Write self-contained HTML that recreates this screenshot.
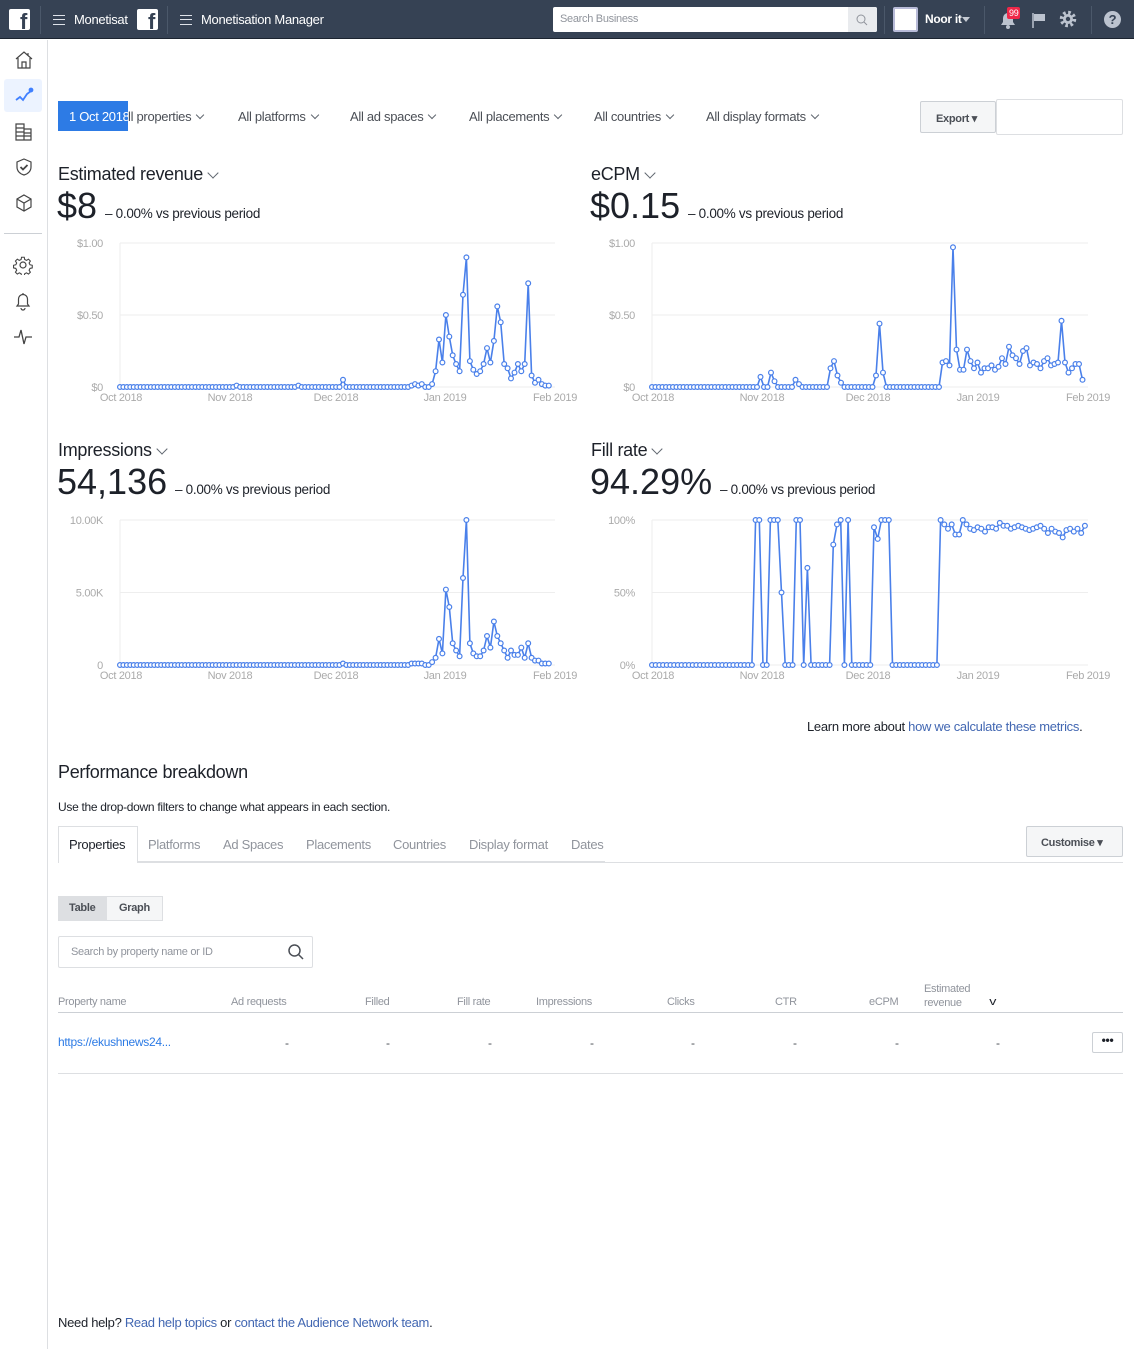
<!DOCTYPE html>
<html><head><meta charset="utf-8">
<style>
*{box-sizing:border-box;margin:0;padding:0}
body{width:1134px;height:1349px;background:#fff;font-family:"Liberation Sans",Arial,sans-serif;color:#1d2129;position:relative;overflow:hidden;letter-spacing:-0.3px}
.abs{position:absolute}
#top{left:0;top:0;width:1134px;height:39px;background:#364254;border-bottom:1px solid #1c2430}
.fb{width:21px;height:21px;background:#fff;border-radius:2px;color:#364254;font-weight:bold;font-size:22px;text-align:right;padding-right:3px;line-height:26px;overflow:hidden}
.ham{width:12px;height:10px;border-top:1.5px solid #dfe3ea;border-bottom:1.5px solid #dfe3ea}
.ham:after{content:"";position:absolute;left:0;top:3px;width:12px;border-top:1.5px solid #dfe3ea}
.wt{color:#fff;font-size:13px}
.sep{width:1px;height:28px;background:#4b586a;top:6px}
#side{left:0;top:40px;width:48px;height:1309px;border-right:1px solid #dddfe2}
.filt{font-size:13px;color:#4b4f56;top:109px}
.chev{display:inline-block;width:6px;height:6px;border-right:1.3px solid #606770;border-bottom:1.3px solid #606770;transform:rotate(45deg);margin-left:6px;position:relative;top:-3px}
.ttl{font-size:18px;color:#1d2129}
.big{font-size:36px;color:#1d2129;letter-spacing:0}
.cmp{font-size:13.5px;color:#1d2129}
.tab{font-size:13px;color:#90949c;top:837px}
.th{font-size:11px;color:#90949c;top:996px}
.dash{font-size:12px;color:#4b4f56;top:1036px}
a{color:#4267b2;text-decoration:none}
svg text{font-family:"Liberation Sans",Arial,sans-serif;font-size:11px;fill:#aaa}
</style></head><body>
<div id="top" class="abs">
 <div class="abs fb" style="left:9px;top:9px">f</div>
 <div class="abs sep" style="left:40px"></div>
 <div class="abs ham" style="left:53px;top:15px"></div>
 <div class="abs wt" style="left:74px;top:12px;width:54px;overflow:hidden;white-space:nowrap">Monetisation</div>
 <div class="abs fb" style="left:137px;top:9px">f</div>
 <div class="abs sep" style="left:167px"></div>
 <div class="abs ham" style="left:180px;top:15px"></div>
 <div class="abs wt" style="left:201px;top:12px">Monetisation Manager</div>
 <div class="abs" style="left:553px;top:7px;width:324px;height:25px;background:#fff;border-radius:2px"></div>
 <div class="abs" style="left:560px;top:13px;font-size:11px;color:#90949c">Search Business</div>
 <div class="abs" style="left:848px;top:7px;width:29px;height:25px;background:#e9ebee;border-radius:0 2px 2px 0"></div>
 <svg class="abs" style="left:855px;top:13px" width="14" height="14"><circle cx="6" cy="6" r="4" stroke="#90949c" fill="none"/><path d="M9 9l3 3" stroke="#90949c"/></svg>
 <div class="abs sep" style="left:884px"></div>
 <div class="abs" style="left:893px;top:7px;width:25px;height:25px;background:#fff;border:2px solid #b8bbd8;border-radius:2px"></div>
 <div class="abs wt" style="left:925px;top:12px;font-size:12px;font-weight:bold">Noor it</div>
 <div class="abs" style="left:962px;top:17px;border:4px solid transparent;border-top:5px solid #c5cad3"></div>
 <div class="abs sep" style="left:984px"></div>
 <svg class="abs" style="left:998px;top:10px" width="20" height="20"><path d="M3 15h14l-2-3V8a5 5 0 0 0-10 0v4z" fill="#bcc3cf"/><circle cx="10" cy="17" r="2" fill="#bcc3cf"/></svg>
 <div class="abs" style="left:1007px;top:7px;background:#f02849;color:#fff;font-size:9px;padding:1px 2px;border-radius:2px">99</div>
 <svg class="abs" style="left:1031px;top:11px" width="16" height="18"><path d="M2 2v15" stroke="#bcc3cf" stroke-width="1.5"/><path d="M3 3h11v7H3z" fill="#bcc3cf"/></svg>
 <svg class="abs" style="left:1058px;top:9px" width="20" height="20" viewBox="0 0 20 20"><circle cx="10" cy="10" r="6.5" fill="none" stroke="#bcc3cf" stroke-width="3.5" stroke-dasharray="2.6 2.5"/><circle cx="10" cy="10" r="5" fill="#bcc3cf"/><circle cx="10" cy="10" r="2.2" fill="#364254"/></svg>
 <div class="abs sep" style="left:1091px"></div>
 <div class="abs" style="left:1104px;top:11px;width:17px;height:17px;border-radius:50%;background:#bcc3cf;color:#364254;font-size:13px;font-weight:bold;text-align:center;line-height:17px">?</div>
</div>

<div id="side" class="abs">
 <svg class="abs" style="left:14px;top:10px" width="20" height="20" fill="none" stroke="#444" stroke-width="1.2"><path d="M2 9l8-7 8 7M4 8v10h12V8M8 18v-6h4v6M14 3v3"/></svg>
 <div class="abs" style="left:4px;top:39px;width:38px;height:33px;background:#ecf3ff;border-radius:3px"></div>
 <svg class="abs" style="left:14px;top:46px" width="20" height="20" fill="none" stroke="#4080ff" stroke-width="1.8"><path d="M2 14l4-3 3 3 4-6 4-3"/><circle cx="17" cy="4" r="1.5" fill="#4080ff"/></svg>
 <svg class="abs" style="left:14px;top:82px" width="20" height="20" fill="none" stroke="#444" stroke-width="1.2"><path d="M2 2h8v16H2zM2 6h8M2 10h8M2 14h8M10 7h7v11h-7M10 11h7M10 14h7"/></svg>
 <svg class="abs" style="left:14px;top:117px" width="20" height="20" fill="none" stroke="#444" stroke-width="1.2"><path d="M10 2l7 3v5c0 4-3 7-7 8-4-1-7-4-7-8V5z"/><path d="M6.5 10l2.5 2.5 4.5-4.5" stroke-width="1.8"/></svg>
 <svg class="abs" style="left:14px;top:153px" width="20" height="20" fill="none" stroke="#444" stroke-width="1.2"><path d="M10 2l7 4v8l-7 4-7-4V6zM3 6l7 4 7-4M10 10v8"/></svg>
 <div class="abs" style="left:4px;top:193px;width:38px;height:1px;background:#ccd0d5"></div>
 <svg class="abs" style="left:13px;top:215px" width="20" height="20" viewBox="0 0 20 20" fill="none" stroke="#444" stroke-width="1.2"><circle cx="10" cy="10" r="3"/><path d="M8.5 1.5h3l.5 2.5 2 1 2.2-1.4 2.1 2.1-1.4 2.2 1 2 2.5.5v3l-2.5.5-1 2 1.4 2.2-2.1 2.1-2.2-1.4-2 1-.5 2.5h-3l-.5-2.5-2-1-2.2 1.4-2.1-2.1 1.4-2.2-1-2-2.5-.5v-3l2.5-.5 1-2-1.4-2.2 2.1-2.1 2.2 1.4 2-1z" transform="scale(.9) translate(1 1)"/></svg>
 <svg class="abs" style="left:13px;top:251px" width="20" height="20" fill="none" stroke="#444" stroke-width="1.2"><path d="M4 15h12l-1.5-2V8a4.5 4.5 0 0 0-9 0v5zM8 17a2 2 0 0 0 4 0M10 2v1.5"/></svg>
 <svg class="abs" style="left:13px;top:287px" width="20" height="20" fill="none" stroke="#444" stroke-width="1.3"><path d="M1 10h5l2-7 3 14 2-7h6"/></svg>
</div>

<div class="abs" style="left:58px;top:101px;width:70px;height:30px;background:#2d7be5;color:#fff;font-size:13px;padding:8px 0 0 11px;white-space:nowrap;overflow:hidden">1 Oct 2018</div>
<div class="abs filt" style="left:128px">ll properties<span class="chev"></span></div>
<div class="abs filt" style="left:238px">All platforms<span class="chev"></span></div>
<div class="abs filt" style="left:350px">All ad spaces<span class="chev"></span></div>
<div class="abs filt" style="left:469px">All placements<span class="chev"></span></div>
<div class="abs filt" style="left:594px">All countries<span class="chev"></span></div>
<div class="abs filt" style="left:706px">All display formats<span class="chev"></span></div>
<div class="abs" style="left:920px;top:101px;width:76px;height:32px;background:#f5f6f7;border:1px solid #ccd0d5;border-radius:2px;font-size:11px;font-weight:bold;color:#4b4f56;padding:10px 0 0 15px">Export ▾</div>
<div class="abs" style="left:996px;top:99px;width:127px;height:36px;border:1px solid #dddfe2;border-radius:2px"></div>

<div class="abs ttl" style="left:58px;top:164px">Estimated revenue<span class="chev" style="width:8px;height:8px"></span></div>
<div class="abs big" style="left:57px;top:185px">$8</div>
<div class="abs cmp" style="left:105px;top:206px">– 0.00% vs previous period</div>
<div class="abs ttl" style="left:591px;top:164px">eCPM<span class="chev" style="width:8px;height:8px"></span></div>
<div class="abs big" style="left:590px;top:185px">$0.15</div>
<div class="abs cmp" style="left:688px;top:206px">– 0.00% vs previous period</div>
<div class="abs ttl" style="left:58px;top:440px">Impressions<span class="chev" style="width:8px;height:8px"></span></div>
<div class="abs big" style="left:57px;top:461px">54,136</div>
<div class="abs cmp" style="left:175px;top:482px">– 0.00% vs previous period</div>
<div class="abs ttl" style="left:591px;top:440px">Fill rate<span class="chev" style="width:8px;height:8px"></span></div>
<div class="abs big" style="left:590px;top:461px">94.29%</div>
<div class="abs cmp" style="left:720px;top:482px">– 0.00% vs previous period</div>

<svg id="ch" class="abs" style="left:0;top:0" width="1134" height="700"></svg>

<div class="abs" style="left:807px;top:719px;font-size:13px">Learn more about <a>how we calculate these metrics</a>.</div>
<div class="abs ttl" style="left:58px;top:762px">Performance breakdown</div>
<div class="abs" style="left:58px;top:800px;font-size:12px">Use the drop-down filters to change what appears in each section.</div>

<div class="abs" style="left:58px;top:862px;width:1065px;height:1px;background:#dddfe2"></div>
<div class="abs" style="left:58px;top:861px;width:547px;height:2px;background:#dddfe2"></div>
<div class="abs" style="left:58px;top:826px;width:80px;height:37px;background:#fff;border:1px solid #dddfe2;border-bottom:none"></div>
<div class="abs tab" style="left:69px;color:#1d2129">Properties</div>
<div class="abs tab" style="left:148px">Platforms</div>
<div class="abs tab" style="left:223px">Ad Spaces</div>
<div class="abs tab" style="left:306px">Placements</div>
<div class="abs tab" style="left:393px">Countries</div>
<div class="abs tab" style="left:469px">Display format</div>
<div class="abs tab" style="left:571px">Dates</div>
<div class="abs" style="left:1026px;top:826px;width:97px;height:31px;background:#f5f6f7;border:1px solid #ccd0d5;border-radius:2px;font-size:11px;font-weight:bold;color:#4b4f56;padding:9px 0 0 14px">Customise ▾</div>

<div class="abs" style="left:58px;top:896px;width:105px;height:25px;border:1px solid #dddfe2;background:#f5f6f7"></div>
<div class="abs" style="left:58px;top:896px;width:49px;height:25px;background:#dddfe2;font-size:11px;font-weight:bold;color:#4b4f56;padding:6px 0 0 11px">Table</div>
<div class="abs" style="left:119px;top:902px;font-size:11px;font-weight:bold;color:#4b4f56">Graph</div>
<div class="abs" style="left:58px;top:936px;width:255px;height:32px;border:1px solid #dddfe2;border-radius:2px"></div>
<div class="abs" style="left:71px;top:946px;font-size:11px;color:#90949c">Search by property name or ID</div>
<svg class="abs" style="left:287px;top:943px" width="18" height="18" fill="none" stroke="#4b4f56" stroke-width="1.5"><circle cx="7.5" cy="7.5" r="5.5"/><path d="M11.5 11.5l4.5 4.5"/></svg>

<div class="abs th" style="left:58px">Property name</div>
<div class="abs th" style="left:231px">Ad requests</div>
<div class="abs th" style="left:365px">Filled</div>
<div class="abs th" style="left:457px">Fill rate</div>
<div class="abs th" style="left:536px">Impressions</div>
<div class="abs th" style="left:667px">Clicks</div>
<div class="abs th" style="left:775px">CTR</div>
<div class="abs th" style="left:869px">eCPM</div>
<div class="abs th" style="left:924px;top:982px;line-height:14px">Estimated<br>revenue</div>
<div class="abs" style="left:990px;top:996px;font-size:11px;color:#1d2129;transform:scaleX(1.3)">v</div>
<div class="abs" style="left:58px;top:1012px;width:1065px;height:1px;background:#ccd0d5"></div>
<div class="abs" style="left:58px;top:1035px;font-size:12px"><a style="color:#2d7be5">https://ekushnews24...</a></div>
<div class="abs dash" style="left:285px">-</div><div class="abs dash" style="left:386px">-</div><div class="abs dash" style="left:488px">-</div><div class="abs dash" style="left:590px">-</div><div class="abs dash" style="left:691px">-</div><div class="abs dash" style="left:793px">-</div><div class="abs dash" style="left:895px">-</div><div class="abs dash" style="left:996px">-</div>
<div class="abs" style="left:1092px;top:1032px;width:31px;height:21px;border:1px solid #ccd0d5;border-radius:2px;font-size:12px;font-weight:bold;text-align:center;line-height:14px">•••</div>
<div class="abs" style="left:58px;top:1073px;width:1065px;height:1px;background:#dddfe2"></div>

<div class="abs" style="left:58px;top:1315px;font-size:13px">Need help? <a>Read help topics</a> or <a>contact the Audience Network team</a>.</div>

<script>
var svg=document.getElementById('ch'),h='';
function Z(n){var a=[];for(var i=0;i<n;i++)a.push(0);return a}
function chart(x0,x1,yt,yb,labels,ticks,data,dx){
 var ym=(yt+yb)/2;
 h+='<line x1="'+x0+'" y1="'+yt+'" x2="'+x0+'" y2="'+yb+'" stroke="#eee"/>';
 [yt,ym,yb].forEach(function(y){h+='<line x1="'+x0+'" y1="'+y+'" x2="'+x1+'" y2="'+y+'" stroke="#eee"/>'});
 h+='<text x="'+(x0-17)+'" y="'+(yt+4)+'" text-anchor="end">'+labels[0]+'</text>';
 h+='<text x="'+(x0-17)+'" y="'+(ym+4)+'" text-anchor="end">'+labels[1]+'</text>';
 h+='<text x="'+(x0-17)+'" y="'+(yb+4)+'" text-anchor="end">'+labels[2]+'</text>';
 var tn=['Oct 2018','Nov 2018','Dec 2018','Jan 2019','Feb 2019'];
 ticks.forEach(function(t,i){h+='<text x="'+t+'" y="'+(yb+14)+'" text-anchor="middle">'+tn[i]+'</text>'});
 var pts=data.map(function(v,i){return [x0+i*dx,yb-v*(yb-yt)]});
 h+='<polyline fill="none" stroke="#4a80ea" stroke-width="1.6" points="'+pts.map(function(p){return p[0].toFixed(1)+','+p[1].toFixed(1)}).join(' ')+'"/>';
 pts.forEach(function(p){h+='<circle cx="'+p[0].toFixed(1)+'" cy="'+p[1].toFixed(1)+'" r="2.4" fill="#fff" stroke="#4a80ea" stroke-width="1.2"/>'});
}
var rev=Z(85);rev[65]=0.05;rev[52]=0.01;rev[34]=0.01;
rev=rev.concat([0.01,0.02,0.01,0.02,0,0,0.02,0.11,0.33,0.17,0.5,0.35,0.22,0.16,0.11,0.64,0.9,0.18,0.12,0.09,0.11,0.16,0.27,0.17,0.32,0.56,0.45,0.16,0.13,0.06,0.10,0.16,0.11,0.16,0.72,0.08,0.03,0.05,0.02,0.01,0.01]);
chart(120,555,243,387,['$1.00','$0.50','$0'],[121,230,336,445,555],rev,3.43);
var imp=Z(85);imp[65]=0.01;
imp=imp.concat([0.01,0.01,0.01,0.01,0,0,0.02,0.05,0.18,0.08,0.52,0.4,0.15,0.1,0.06,0.6,1.0,0.15,0.08,0.06,0.06,0.1,0.2,0.12,0.3,0.2,0.15,0.1,0.05,0.1,0.07,0.07,0.12,0.05,0.15,0.05,0.03,0.03,0.01,0.01,0.01]);
chart(120,555,520,665,['10.00K','5.00K','0'],[121,230,336,445,555],imp,3.43);
var ec=Z(83);
[[31,0.07],[34,0.1],[35,0.04],[41,0.05],[42,0.02],[51,0.13],[52,0.18],[53,0.08],[54,0.03],[64,0.08],[65,0.44],[66,0.1]].forEach(function(p){ec[p[0]]=p[1]});
var tail=[0.17,0.18,0.15,0.97,0.26,0.12,0.12,0.26,0.18,0.13,0.17,0.1,0.13,0.13,0.15,0.12,0.14,0.2,0.16,0.28,0.22,0.2,0.16,0.25,0.27,0.15,0.17,0.16,0.13,0.18,0.2,0.15,0.16,0.17,0.46,0.17,0.1,0.13,0.16,0.16,0.05];
ec=ec.concat(tail);
chart(652,1088,243,387,['$1.00','$0.50','$0'],[653,762,868,978,1088],ec,3.5);
var fr=Z(28).concat([1,1,0,0,1,1,1,0.5,0,0,0,1,1,0,0.67,0,0,0,0,0,0,0.83,0.97,1,0,1,0,0,0,0,0,0,0.95,0.87,1,1,1,0,0,0,0,0,0,0,0,0,0,0,0,0]);
var jt=[1,0.97,0.94,0.97,0.9,0.9,1,0.97,0.94,0.93,0.95,0.94,0.92,0.95,0.95,0.94,0.98,0.96,0.96,0.94,0.95,0.96,0.95,0.94,0.93,0.94,0.95,0.96,0.94,0.91,0.94,0.92,0.91,0.88,0.93,0.94,0.92,0.94,0.91,0.96];
fr=fr.concat(jt);
chart(652,1088,520,665,['100%','50%','0%'],[653,762,868,978,1088],fr,3.7);
svg.innerHTML=h;
</script>
</body></html>
